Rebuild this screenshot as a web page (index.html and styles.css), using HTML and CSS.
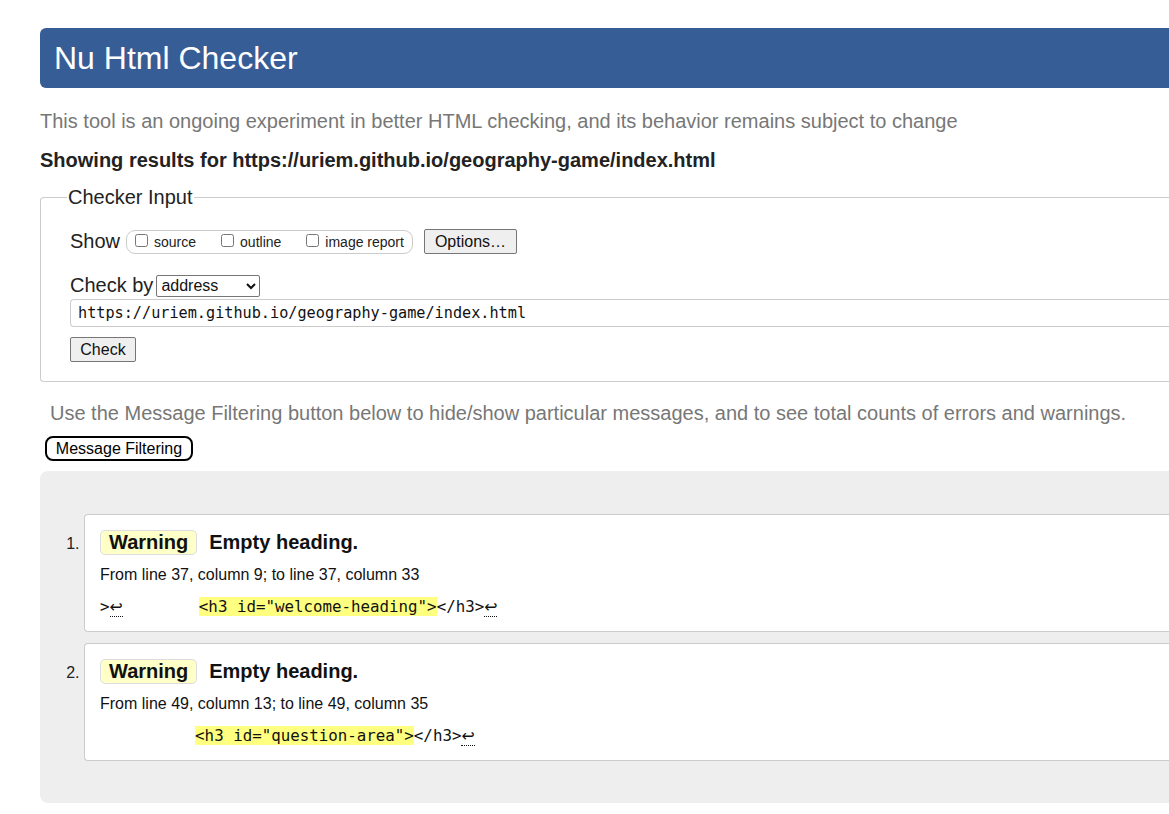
FILE: index.html
```html
<!DOCTYPE html>
<html lang="en">
<head>
<meta charset="utf-8">
<title>Nu Html Checker</title>
<link rel="stylesheet" href="styles.css">
</head>
<body>
<div class="page">
  <h1 class="banner">Nu Html Checker</h1>
  <p class="tagline">This tool is an ongoing experiment in better HTML checking, and its behavior remains subject to change</p>
  <p class="showing">Showing results for https://uriem.github.io/geography-game/index.html</p>

  <fieldset class="input-box">
    <legend>Checker Input</legend>
    <div class="row show-row">
      <span class="lbl">Show</span>
      <span class="checks">
        <label><input type="checkbox"> source</label>
        <label><input type="checkbox"> outline</label>
        <label><input type="checkbox"> image report</label>
      </span>
      <button class="btn">Options…</button>
    </div>
    <div class="row by-row">
      <span class="lbl">Check by</span>
      <select class="sel"><option>address</option></select>
    </div>
    <input class="url" type="text" value="https://uriem.github.io/geography-game/index.html">
    <button class="btn check-btn">Check</button>
  </fieldset>

  <p class="hint">Use the Message Filtering button below to hide/show particular messages, and to see total counts of errors and warnings.</p>
  <button class="filter-btn">Message Filtering</button>

  <div class="results">
    <ol class="msgs">
      <li class="msg">
        <p class="msg-head"><span class="badge">Warning</span><span class="msg-title">Empty heading.</span></p>
        <p class="loc">From line 37, column 9; to line 37, column 33</p>
        <p class="code">&gt;<abbr class="lf">↩</abbr>        <b class="hl">&lt;h3 id="welcome-heading"&gt;</b>&lt;/h3&gt;<abbr class="lf">↩</abbr></p>
      </li>
      <li class="msg">
        <p class="msg-head"><span class="badge">Warning</span><span class="msg-title">Empty heading.</span></p>
        <p class="loc">From line 49, column 13; to line 49, column 35</p>
        <p class="code">          <b class="hl">&lt;h3 id="question-area"&gt;</b>&lt;/h3&gt;<abbr class="lf">↩</abbr></p>
      </li>
    </ol>
  </div>
</div>
</body>
</html>
```

FILE: styles.css
```css
html, body {
  margin: 0;
  padding: 0;
  overflow: hidden;
  background: #fff;
}
body {
  font-family: "Liberation Sans", Arial, sans-serif;
  color: #111;
}
.page {
  width: 1200px;
  padding: 28px 0 0 40px;
}
.banner {
  margin: 0;
  height: 60px;
  background: #365d95;
  color: #fff;
  font-weight: normal;
  font-size: 32px;
  line-height: 60px;
  padding-left: 14px;
  border-radius: 6px 0 0 6px;
}
.tagline {
  margin: 21px 0 0;
  font-size: 20px;
  line-height: 24px;
  color: #777;
}
.showing {
  margin: 15px 0 0;
  font-size: 20px;
  line-height: 24px;
  font-weight: bold;
  color: #222;
}
.input-box {
  margin: 14px 0 0;
  padding: 20px 0 19px 29px;
  border: 1px solid #ccc;
  border-right: none;
  border-radius: 4px 0 0 4px;
}
.input-box legend {
  font-size: 20px;
  padding: 0 1px;
  margin-left: -3px;
  color: #222;
}
.row {
  display: flex;
  align-items: center;
}
.lbl {
  font-size: 20px;
  color: #222;
}
.checks {
  display: flex;
  align-items: center;
  margin-left: 6px;
  height: 22px;
  padding: 0 8px 0 8px;
  border: 1px solid #ccc;
  border-radius: 9px;
  font-size: 14px;
}
.checks label {
  display: flex;
  align-items: center;
  margin-right: 25px;
  color: #222;
}
.checks label:last-child { margin-right: 0; }
.checks input {
  width: 13px;
  height: 13px;
  margin: 0 6px 3px 0;
}
.btn {
  font-family: "Liberation Sans", Arial, sans-serif;
  font-size: 16px;
  background: #efefef;
  border: 1px solid #767676;
  border-radius: 2px;
  color: #111;
  padding: 0 10px;
  height: 25px;
}
.show-row .btn { margin-left: 11px; }
.by-row { margin-top: 20px; }
.sel {
  font-family: "Liberation Sans", Arial, sans-serif;
  font-size: 16px;
  width: 104px;
  height: 22px;
  margin-left: 3px;
  border: 1px solid #767676;
  border-radius: 2px;
  background: #fff;
  color: #111;
}
.url {
  display: block;
  box-sizing: border-box;
  width: 100%;
  height: 28px;
  margin: 2px 0 0;
  padding: 0 7px;
  border: 1px solid #ccc;
  border-right: none;
  border-radius: 4px 0 0 4px;
  font-family: "DejaVu Sans Mono", "Liberation Mono", monospace;
  font-size: 15.2px;
  color: #111;
}
.check-btn {
  display: block;
  margin-top: 10px;
  width: 66px;
  padding: 0;
}
.hint {
  margin: 19px 0 0 10px;
  font-size: 20px;
  line-height: 24px;
  color: #777;
}
.filter-btn {
  display: block;
  margin: 11px 0 0 5px;
  font-family: "Liberation Sans", Arial, sans-serif;
  font-size: 16px;
  background: #fff;
  color: #000;
  border: 2px solid #000;
  border-radius: 8px;
  height: 25px;
  width: 148px;
  padding: 0;
}
.results {
  margin-top: 10px;
  background: #eee;
  border-radius: 8px 0 0 8px;
  padding: 43px 0 42px 44px;
}
.msgs {
  margin: 0;
  padding: 0;
  list-style: decimal;
  font-size: 16px;
}
.msg {
  background: #fff;
  border: 1px solid #ccc;
  border-right: none;
  border-radius: 4px 0 0 4px;
  padding: 14px 0 13px 15px;
  margin-bottom: 11px;
}
.msg:last-child { margin-bottom: 0; }
.msg::marker {
  font-size: 16px;
  color: #222;
}
.msg-head {
  margin: 0;
  display: flex;
  align-items: center;
  height: 27px;
}
.badge {
  display: inline-block;
  box-sizing: border-box;
  height: 25px;
  line-height: 23px;
  padding: 0 8px;
  background: #ffffc8;
  border: 1px solid #ddd;
  border-radius: 5px;
  font-weight: bold;
  font-size: 20px;
  color: #111;
}
.msg-title {
  margin-left: 12px;
  font-weight: bold;
  font-size: 20px;
  color: #111;
}
.loc {
  margin: 9px 0 0;
  font-size: 16px;
  line-height: 20px;
  color: #111;
}
.code {
  margin: 11px 0 0;
  white-space: pre;
  font-family: "DejaVu Sans Mono", "Liberation Mono", monospace;
  font-size: 15.8px;
  line-height: 22px;
  color: #111;
}
.hl {
  font-weight: normal;
  background: #ffff80;
}
.lf {
  text-decoration: none;
  border-bottom: 1px dotted #111;
  font-family: "DejaVu Sans", sans-serif;
}
```
